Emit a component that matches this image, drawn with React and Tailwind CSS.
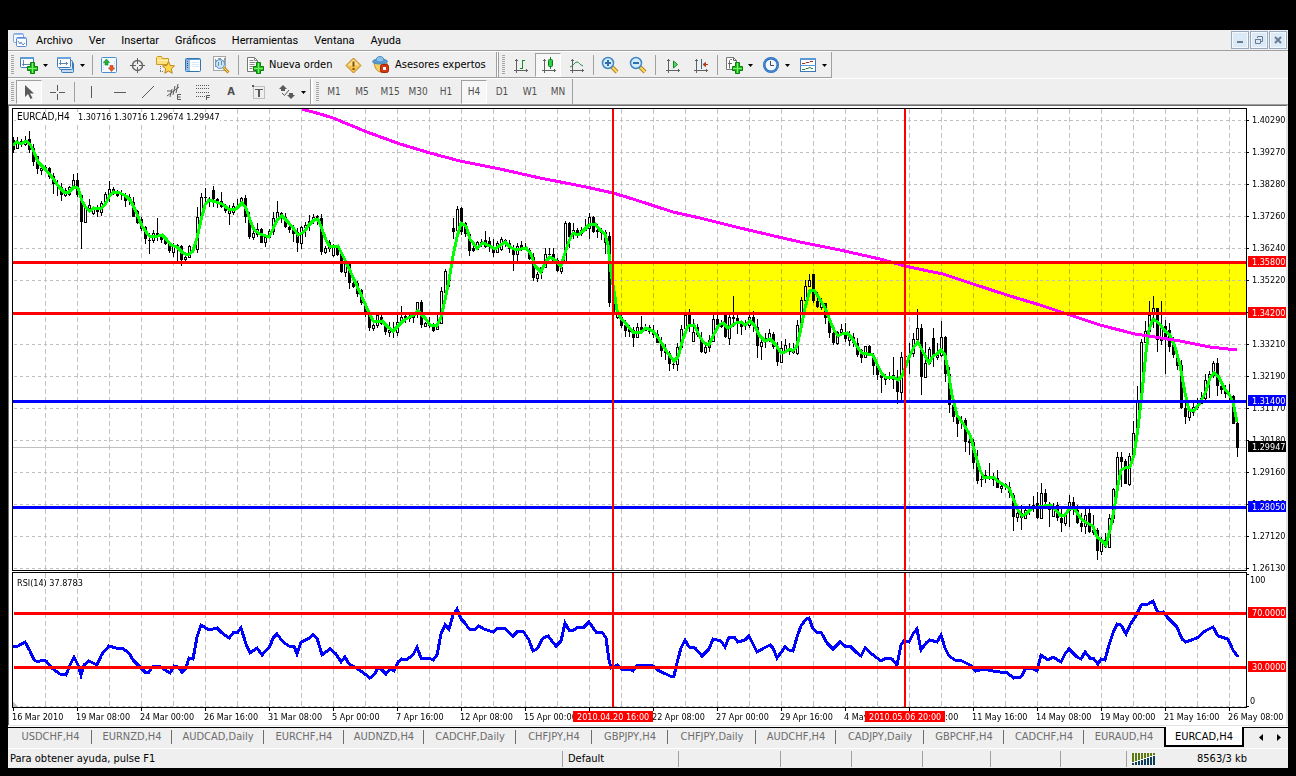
import React, { useState } from 'react';

const MENUS = ['Archivo', 'Ver', 'Insertar', 'Gráficos', 'Herramientas', 'Ventana', 'Ayuda'];

const TIMEFRAMES = ['M1', 'M5', 'M15', 'M30', 'H1', 'H4', 'D1', 'W1', 'MN'];

const TABS = [
  { name: 'USDCHF,H4', width: 'w-[83px]' },
  { name: 'EURNZD,H4', width: 'w-[80px]' },
  { name: 'AUDCAD,Daily', width: 'w-[92px]' },
  { name: 'EURCHF,H4', width: 'w-[80px]' },
  { name: 'AUDNZD,H4', width: 'w-[80px]' },
  { name: 'CADCHF,Daily', width: 'w-[92px]' },
  { name: 'CHFJPY,H4', width: 'w-[76px]' },
  { name: 'GBPJPY,H4', width: 'w-[76px]' },
  { name: 'CHFJPY,Daily', width: 'w-[88px]' },
  { name: 'AUDCHF,H4', width: 'w-[80px]' },
  { name: 'CADJPY,Daily', width: 'w-[88px]' },
  { name: 'GBPCHF,H4', width: 'w-[80px]' },
  { name: 'CADCHF,H4', width: 'w-[80px]' },
  { name: 'EURAUD,H4', width: 'w-[80px]' },
  { name: 'EURCAD,H4', width: 'w-[80px]' },
];

// high, open, close, low as chart rows, one entry per H4 bar
const BARS = `
137 140 150 153,137 148 141 149,139 141 143 147,136 144 141 146,131 139 150 153,144 148 162 166,156 156 169 174,163 170 168 175,
165 167 169 172,167 168 177 179,173 176 184 194,180 184 186 196,183 187 195 201,188 195 190 197,186 194 187 196,174 188 180 189,
173 180 195 197,194 195 222 249,206 222 207 223,199 208 205 210,206 213 209 215,205 208 212 217,201 212 203 216,192 204 194 206,
181 196 189 202,187 189 193 195,190 192 196 197,190 194 195 200,193 195 201 207,194 197 201 205,197 202 217 217,210 211 223 224,
217 219 229 231,226 227 239 244,233 240 241 254,230 240 233 243,218 233 236 241,234 236 240 243,236 238 244 245,243 244 251 253,
243 252 246 257,244 245 248 262,245 246 260 266,254 259 257 261,245 257 246 257,246 249 251 252,207 249 217 253,193 217 197 217,
188 197 198 203,197 199 201 207,186 190 199 207,198 199 202 208,192 201 207 208,204 205 211 213,205 213 210 225,203 212 206 215,
199 208 206 209,197 205 198 206,195 198 217 223,212 217 237 239,228 237 233 240,223 234 229 237,228 229 243 243,235 242 237 247,
229 237 231 239,212 231 218 235,201 218 212 221,212 213 217 223,213 217 227 228,222 227 230 233,225 228 234 242,228 232 243 252,
226 243 227 249,222 227 225 237,215 225 221 231,214 221 217 224,215 216 219 225,214 218 252 255,246 252 248 254,240 248 242 252,
244 255 247 257,246 248 255 256,254 254 272 273,259 272 262 277,262 262 283 289,275 283 287 288,281 283 294 297,289 290 303 305,
303 305 313 317,312 314 328 331,320 328 325 331,312 325 315 328,313 317 324 325,322 324 332 335,322 332 330 337,322 330 332 338,
315 332 322 336,306 322 317 325,315 316 319 323,313 318 316 322,312 317 313 323,302 313 302 318,300 302 325 328,322 326 323 327,
317 324 326 328,323 327 331 332,315 329 323 330,287 323 291 323,269 292 271 295,270 280 277 287,218 228 232 239,206 230 209 233,
207 208 232 235,222 223 234 237,232 234 251 256,245 248 251 252,241 249 242 250,239 242 243 247,231 240 247 248,237 241 246 252,
239 247 253 257,241 252 243 253,237 249 239 251,239 240 244 247,240 243 249 253,245 248 255 271,243 254 246 264,241 245 248 251,
243 247 249 250,248 250 259 260,253 257 278 281,272 278 274 282,270 272 267 279,248 267 254 268,248 254 255 258,248 254 262 263,
258 260 271 272,260 271 267 274,221 263 223 264,222 223 237 248,223 233 230 239,228 230 233 238,227 233 230 236,219 230 228 231,
213 228 217 239,216 217 232 233,224 230 232 238,228 231 233 240,230 232 243 254,232 236 303 307,298 303 315 319,312 317 314 319,
313 317 326 328,320 325 331 337,325 328 332 337,327 330 338 347,323 337 327 338,316 327 330 332,324 330 327 331,325 327 332 334,
325 330 335 338,330 334 343 343,337 343 351 357,344 350 353 360,351 353 364 371,358 364 365 369,343 364 347 371,325 347 329 348,
314 328 315 330,309 314 325 332,319 341 332 342,324 327 335 337,332 338 352 353,343 352 347 354,335 347 340 352,314 341 319 342,
315 319 325 327,320 323 327 328,314 315 337 338,314 338 317 345,296 317 319 327,313 318 323 334,320 323 327 335,320 325 323 330,
312 325 317 328,311 317 323 332,319 327 346 358,338 346 342 360,333 340 338 348,329 340 333 342,332 334 347 349,342 347 362 366,
341 362 348 362,339 350 345 353,343 348 352 355,343 352 349 354,320 353 325 355,297 325 300 330,280 300 286 303,274 286 280 286,
274 274 301 303,292 301 307 308,298 307 302 310,303 303 318 324,317 318 333 338,330 333 343 345,331 343 332 345,324 332 329 335,
323 332 339 342,331 340 336 346,333 337 343 347,338 343 355 357,349 350 358 363,346 357 346 358,345 346 354 355,353 355 366 375,
363 366 375 380,372 375 378 393,374 379 376 385,372 376 378 380,357 375 380 389,370 377 392 404,352 392 357 400,353 357 356 370,
343 357 355 374,333 353 339 357,309 339 328 343,324 328 377 395,342 377 363 377,347 363 349 364,328 338 355 367,343 357 355 360,
321 355 337 357,336 337 374 382,367 374 405 413,397 405 417 422,412 417 424 437,416 422 423 429,418 420 442 452,437 441 443 455,
439 442 463 469,450 463 481 484,475 479 480 487,470 477 475 483,463 477 478 480,473 477 480 486,470 478 488 488,483 488 486 493,
483 484 486 490,482 487 493 498,493 495 517 531,507 517 513 522,505 513 518 530,507 518 510 519,504 511 507 515,496 508 505 512,
492 503 518 519,483 518 493 519,489 493 502 505,502 504 510 527,503 516 506 517,502 505 518 521,507 518 523 532,513 523 515 526,
495 510 502 527,497 502 510 515,505 510 523 524,513 523 527 532,509 526 515 534,508 513 532 533,515 530 533 535,528 530 551 560,
537 551 540 555,533 540 547 548,514 547 518 547,488 518 489 523,452 489 457 490,452 457 462 487,459 461 484 484,453 484 456 486,
421 456 433 457,386 433 400 435,339 400 342 402,321 342 331 343,301 331 315 337,296 313 308 328,308 308 340 352,301 340 327 345,
320 326 337 374,323 330 347 352,337 345 355 358,355 356 366 370,360 365 408 409,397 408 417 424,407 417 410 421,400 412 407 416,
398 407 405 410,392 403 398 404,374 398 380 400,371 380 374 398,361 375 363 378,358 363 386 396,380 386 390 394,385 390 394 398,
384 394 396 402,395 396 424 424,422 423 448 457`
  .trim()
  .split(/,\s*/)
  .map((bar) => bar.split(' ').map(Number));

const FAST_MA =
  '13,145 17,142 21,144 26,141 30,144 34,152 38,162 45,169 52,177 59,187 64,192 69,192 74,187 78,188 82,201 86,208 90,211 94,208 98,209 102,208 106,203 110,195 114,192 120,193 126,196 131,201 137,214 142,226 149,236 154,237 162,235 166,239 171,245 177,247 183,253 188,255 193,251 197,238 201,220 205,205 209,200 216,202 222,204 230,210 236,209 242,203 246,208 250,220 254,230 260,234 269,237 273,229 277,220 282,216 288,222 294,229 298,235 304,232 309,225 314,220 318,219 322,229 326,240 330,247 338,246 344,258 352,275 362,297 366,306 370,315 374,322 382,321 388,327 393,331 398,326 404,320 410,317 414,315 418,311 422,315 426,319 430,325 437,326 441,317 445,300 449,280 453,256 457,237 461,223 466,226 470,239 477,248 483,243 490,246 495,249 505,242 510,247 516,250 526,248 531,254 535,266 541,272 546,261 550,257 555,260 561,266 565,253 569,241 573,233 578,235 583,231 589,225 595,224 600,230 605,234 608,245 611,272 614,291 617,310 620,317 627,325 633,332 641,332 646,328 653,331 659,339 667,352 674,361 678,357 683,339 688,326 694,325 700,337 704,343 709,345 714,334 719,325 723,323 728,328 736,323 741,322 745,325 750,321 755,326 759,335 765,341 770,339 776,345 781,353 785,352 790,349 793,351 797,346 801,328 805,308 810,290 814,290 819,298 825,308 829,318 834,330 838,336 842,334 847,333 852,338 856,345 862,353 873,355 877,364 882,374 886,377 893,377 898,380 902,376 905,368 910,355 914,347 918,342 923,352 929,363 933,356 937,354 941,350 945,355 948,370 952,395 957,415 964,425 970,435 975,453 980,470 984,478 988,477 993,477 999,482 1009,488 1013,498 1018,510 1022,516 1026,514 1032,508 1038,507 1050,505 1054,508 1060,515 1065,515 1070,508 1074,508 1081,519 1087,523 1093,526 1097,537 1102,541 1106,545 1110,530 1114,510 1118,485 1121,470 1125,468 1130,467 1134,455 1138,428 1142,393 1146,352 1149,330 1153,319 1159,323 1165,331 1170,335 1175,347 1180,365 1185,393 1189,410 1194,411 1200,403 1206,391 1210,378 1214,373 1219,377 1224,388 1229,394 1233,402 1237,422';

const SLOW_MA =
  '302,109 320,114 333,118 350,125 367,132 400,144 430,153 460,161 500,169 540,178 586,187 613,193 633,199 673,212 700,218 740,228 770,235 800,242 840,250 880,259 905,266 928,271 943,274 973,284 1010,296 1040,305 1070,315 1100,325 1135,334 1155,337 1180,341 1210,347 1237,350';

const RSI =
  '13,646 18,646 25,642 30,651 34,660 38,662 42,660 46,661 52,668 60,674 66,675 70,665 74,657 78,665 81,675 84,665 89,661 97,665 102,654 109,646 116,648 122,648 129,653 133,660 141,668 145,672 149,672 153,666 159,666 165,670 170,673 174,666 178,667 182,672 186,668 189,658 193,659 197,637 201,625 209,630 217,628 222,633 229,638 234,632 238,632 241,628 246,644 250,653 257,648 262,655 270,646 273,638 277,634 283,642 289,646 294,646 297,654 301,642 308,639 313,635 317,638 322,655 330,649 336,654 341,662 345,657 349,664 353,666 361,671 370,678 374,675 378,668 382,670 386,674 390,669 394,671 398,662 402,659 406,660 413,655 417,647 421,658 429,658 433,660 437,655 441,634 445,625 449,629 453,615 457,609 461,619 465,623 469,629 474,630 479,626 484,629 493,632 498,628 504,628 513,636 518,631 523,631 529,640 533,651 537,649 543,638 548,636 556,646 561,641 565,623 569,630 574,630 578,627 584,627 589,622 596,632 602,632 606,638 609,660 611,668 617,665 622,669 629,669 633,671 637,665 645,665 653,666 659,671 666,674 670,676 674,676 677,663 681,648 685,640 689,647 695,648 702,656 709,649 713,639 721,641 725,647 729,637 734,637 738,642 745,640 749,636 753,644 757,652 764,648 770,645 773,648 777,658 785,647 789,650 793,651 797,637 801,626 806,619 809,618 813,629 817,632 821,632 827,643 833,649 840,642 845,646 850,646 857,653 861,656 865,648 873,655 881,661 886,658 892,659 897,665 901,645 904,641 909,642 913,634 917,629 919,640 921,650 926,643 930,640 937,642 941,635 945,648 949,656 955,660 962,661 970,665 976,671 984,669 993,671 1000,672 1006,672 1014,678 1021,677 1026,668 1032,668 1037,671 1041,655 1048,660 1053,657 1061,662 1065,654 1069,649 1077,657 1081,659 1085,652 1090,658 1093,658 1098,664 1101,659 1105,660 1109,645 1113,633 1117,624 1121,625 1126,634 1130,625 1137,614 1141,605 1148,604 1153,601 1158,613 1163,612 1168,618 1177,627 1182,639 1186,642 1197,638 1205,631 1213,627 1218,636 1228,639 1233,650 1238,657';

const PRICES = [
  '1.40290', '1.39270', '1.38280', '1.37260', '1.36240', '1.35220', '1.34230', '1.33210',
  '1.32190', '1.31170', '1.30180', '1.29160', '1.28140', '1.27120', '1.26130',
];

const TIMES = [
  '16 Mar 2010', '19 Mar 08:00', '24 Mar 00:00', '26 Mar 16:00', '31 Mar 08:00', '5 Apr 00:00', '7 Apr 16:00',
  '12 Apr 08:00', '15 Apr 00:00', '19 Apr 16:00', '22 Apr 08:00', '27 Apr 00:00', '29 Apr 16:00', '4 May 08:00',
  '7 May 00:00', '11 May 16:00', '14 May 08:00', '19 May 00:00', '21 May 16:00', '26 May 08:00',
];

const PRICE_TAGS = [
  { y: 256, text: '1.35800', fill: '#ff0000' },
  { y: 307, text: '1.34200', fill: '#ff0000' },
  { y: 395, text: '1.31400', fill: '#0000ff' },
  { y: 441, text: '1.29947', fill: '#000000' },
  { y: 501, text: '1.28050', fill: '#0000ff' },
  { y: 607, text: '70.00000', fill: '#ff0000' },
  { y: 661, text: '30.00000', fill: '#ff0000' },
];

const TIME_TAGS = [
  { x: 573, text: '2010.04.20 16:00' },
  { x: 865, text: '2010.05.06 20:00' },
];

const GRID_X = Array.from({ length: 38 }, (_, i) => 45 + i * 32);
const GRID_Y = Array.from({ length: 15 }, (_, i) => 120 + i * 32);

function Candles() {
  let wicks = '';
  let down = '';
  let up = '';
  BARS.forEach(([high, open, close, low], i) => {
    const x = 13 + i * 4;
    const top = Math.min(open, close);
    const height = Math.max(Math.abs(open - close), 1);
    wicks += `M${x} ${high}h1V${low}h-1z`;
    if (close > open || height < 2) {
      down += `M${x - 1} ${top}h3v${height}h-3z`;
    } else {
      down += `M${x - 1} ${top}h3v${height + 1}h-3z`;
      up += `M${x} ${top + 1}h1v${height - 1}h-1z`;
    }
  });
  return (
    <g>
      <path d={wicks} fill="#000" />
      <path d={down} fill="#000" />
      <path d={up} fill="#fff" />
    </g>
  );
}

function Chart() {
  return (
    <svg
      viewBox="12 108 1274 617"
      className="block w-full h-auto bg-white isolate font-['DejaVu_Sans_Condensed','DejaVu_Sans',sans-serif] text-[9px]"
      shapeRendering="crispEdges"
      role="img"
      aria-label="EURCAD H4"
    >
      <rect x="12" y="108" width="1274" height="617" fill="#fff" />

      {/* Grid, with the resistance zone tinting the vertical lines */}
      <g stroke="#c0c0c0" strokeDasharray="5 3">
        {GRID_X.map((x) => (
          <path key={x} d={`M${x + 0.5} 109V570M${x + 0.5} 573V706`} />
        ))}
      </g>
      <rect x="613" y="264" width="633" height="48" fill="#ffff00" className="mix-blend-multiply" />
      <g stroke="#c0c0c0" strokeDasharray="3 3">
        {GRID_Y.map((y) => (
          <path key={y} d={`M14 ${y + 0.5}H1246`} />
        ))}
        <path d="M14 706.5H1246" />
      </g>
      <path d="M13 447.5H1246" stroke="#c0c0c0" />
      <path d="M13 702l5 5h-5z" fill="#c0c0c0" />

      <Candles />
      <polyline points={FAST_MA} fill="none" stroke="#00ff00" strokeWidth="3" />
      <polyline points={SLOW_MA} fill="none" stroke="#ff00ff" strokeWidth="3" />
      <polyline points={RSI} fill="none" stroke="#0000ff" strokeWidth="3" />

      {/* Support and resistance levels */}
      <path d="M13 262.5H1246M13 313.5H1246M14 613.5H1246M14 667.5H1246" stroke="#ff0000" strokeWidth="3" />
      <path d="M13 401.5H1246M13 507.5H1246" stroke="#0000ff" strokeWidth="3" />
      <path d="M613 109V570M613 573V707M905 109V570M905 573V707" stroke="#ff0000" strokeWidth="2" />

      {/* Pane frames */}
      <g fill="none" stroke="#000">
        <rect x="12.5" y="108.5" width="1234" height="462" />
        <rect x="12.5" y="572.5" width="1234" height="135" />
        {GRID_Y.map((y) => (
          <path key={y} d={`M1247 ${y + 0.5}h2`} />
        ))}
        <path d="M1247 574.5h2M1247 706.5h2" />
        {TIMES.map((t, i) => (
          <path key={t} d={`M${13.5 + i * 64} 708v3`} />
        ))}
      </g>

      <rect x="16" y="112" width="204" height="10" fill="#fff" />
      <text x="17" y="120" className="text-[10px]">EURCAD,H4</text>
      <text x="78" y="120">1.30716 1.30716 1.29674 1.29947</text>
      <text x="17" y="586">RSI(14) 37.8783</text>

      {PRICES.map((price, i) => (
        <text key={price} x="1252" y={123 + i * 32}>{price}</text>
      ))}
      <text x="1250" y="583">100</text>
      <text x="1250" y="704">0</text>
      {PRICE_TAGS.map((tag) => (
        <g key={tag.text}>
          <rect x="1248" y={tag.y} width="38" height="11" fill={tag.fill} />
          <text x="1252" y={tag.y + 9} fill="#fff">{tag.text}</text>
        </g>
      ))}

      {TIMES.map((t, i) => (
        <text key={t} x={12 + i * 64} y="720">{t}</text>
      ))}
      {TIME_TAGS.map((tag) => (
        <g key={tag.text}>
          <rect x={tag.x} y="711" width="80" height="11" fill="#ff0000" />
          <text x={tag.x + 4} y="720" fill="#fff">{tag.text}</text>
        </g>
      ))}
    </svg>
  );
}

function Icon({ children }) {
  return (
    <svg viewBox="0 0 20 20" className="w-5 h-5 shrink-0" fill="none" aria-hidden="true">
      {children}
    </svg>
  );
}

function Plus() {
  return (
    <>
      <path d="M11.5 7.5h4v4h3v4h-3v3h-4v-3h-3v-4h3z" fill="#1fc21f" stroke="#0a7d0a" />
      <path d="M13.5 8v10M9 13.5h9" stroke="#7bf06a" />
    </>
  );
}

function NewChartIcon() {
  return (
    <Icon>
      <rect x="1.5" y="2.5" width="13" height="10" rx="1" fill="#fff" stroke="#3d7ab8" />
      <path d="M1 3h14" stroke="#5b9bd8" strokeWidth="2" />
      <path d="M4.5 5v6M3 9.5h8" stroke="#5b86ad" />
      <Plus />
    </Icon>
  );
}

function ProfilesIcon() {
  return (
    <Icon>
      <rect x="5.5" y="7.5" width="12" height="10" rx="1" fill="#c3dcf3" stroke="#3d7ab8" />
      <rect x="3.5" y="5.5" width="13" height="9" rx="1" fill="#dceafa" stroke="#3d7ab8" />
      <rect x="1.5" y="2.5" width="13" height="10" rx="1" fill="#fff" stroke="#3d7ab8" />
      <path d="M1 3h14" stroke="#6ba5dc" strokeWidth="2" />
      <path d="M4.5 5v5M3 8.5h9M10.5 7v3" stroke="#5b86ad" />
    </Icon>
  );
}

function MarketWatchIcon() {
  return (
    <Icon>
      <rect x="2.5" y="2.5" width="15" height="15" rx="1" fill="#f4faff" stroke="#4a90cf" />
      <path d="M4.5 15V5M15.5 15V5" stroke="#c5d9ec" strokeDasharray="1 1" />
      <path d="M7.5 4l3 3.5H9V10H6V7.5H4.5z" fill="#22b53a" stroke="#0f7d22" strokeWidth=".6" />
      <path d="M12.5 16.5l-3-3.5H11v-2.5h3V13h1.5z" fill="#ee5a24" stroke="#b03a10" strokeWidth=".6" />
    </Icon>
  );
}

function CrosshairIcon() {
  return (
    <Icon>
      <circle cx="10.5" cy="10.5" r="5" stroke="#6a6a6a" strokeWidth="1.5" />
      <path d="M10.5 3v6M10.5 12v6M3 10.5h6M12 10.5h6" stroke="#5f5f5f" />
    </Icon>
  );
}

function NavigatorIcon() {
  return (
    <Icon>
      <path d="M1.5 9.5v-7l1-1h4l1 2h6v6z" fill="#ffe07a" stroke="#c99a25" />
      <path d="M2 5.5h11" stroke="#fff2b8" />
      <path d="M5.5 11v6M5 16.5h4" stroke="#777" strokeDasharray="1 1" />
      <path d="M13.5 6.5l1.7 4 4.3.4-3.2 2.9.9 4.4-3.7-2.2-3.7 2.2.9-4.4-3.2-2.9 4.3-.4z" fill="#ffd84a" stroke="#b8831a" />
    </Icon>
  );
}

function DataIcon() {
  return (
    <Icon>
      <rect x="2.5" y="3.5" width="15" height="13" rx="1" fill="#fff" stroke="#2e75b6" />
      <path d="M3 4.5h14" stroke="#5f9fd9" />
      <path d="M3 5h4v11H3z" fill="#8dbdea" />
      <path d="M4 6h1v1H4zM4 12h1v1H4z" fill="#d22" />
      <path d="M4 8h1v1H4zM4 10h1v1H4z" fill="#124a86" />
      <path d="M9 7.5h7M9 9.5h7M9 11.5h7" stroke="#dbe8f5" />
    </Icon>
  );
}

function TesterIcon() {
  return (
    <Icon>
      <rect x="2.5" y="1.5" width="12" height="14" fill="#fafafa" stroke="#a5a5a5" />
      <path d="M4.5 4v8M13.5 3v5M7 3.5h3M4.5 5.5h8" stroke="#8b9aa8" />
      <circle cx="9" cy="9" r="4.5" fill="#bfe0f8" fillOpacity=".8" stroke="#5a97c9" />
      <path d="M7.5 7v4M10.5 6v4" stroke="#6d8ba5" />
      <path d="M12.5 12.5l5 5" stroke="#c08d1c" strokeWidth="3" />
      <path d="M12.5 12.5l4.5 4.5" stroke="#ffd764" />
    </Icon>
  );
}

function NewOrderIcon() {
  return (
    <Icon>
      <path d="M2.5 2.5h7l3 3v11h-10z" fill="#fff" stroke="#777" />
      <path d="M9.5 2.5v3h3M4.5 5.5h4M4.5 7.5h6M4.5 9.5h5M4.5 11.5h4M4.5 13.5h3" stroke="#8a8a8a" />
      <Plus />
    </Icon>
  );
}

function AlertIcon() {
  return (
    <Icon>
      <path d="M10.5 3l7.500 7.500-7.500 7.500L3 10.5z" fill="#f3c04e" stroke="#b9821d" strokeLinejoin="round" />
      <path d="M10.5 4.5l6 6h-12z" fill="#ffe29a" />
      <path d="M9.5 6.5h2v5h-2zM9.5 13h2v2h-2z" fill="#7d4f0c" />
    </Icon>
  );
}

function ExpertIcon() {
  return (
    <Icon>
      <path d="M3 8c1 5 3 9 7 9s6-4 6-9z" fill="#f7cf62" stroke="#c08a22" />
      <ellipse cx="9" cy="6.5" rx="7.5" ry="2.5" fill="#5c9bd0" stroke="#4a8cc4" />
      <path d="M5 6c0-3 1.5-4.5 4-4.5S13 3 13 6c-2 1.300-6 1.300-8 0z" fill="#8cc1ea" stroke="#4a8cc4" />
      <rect x="9.5" y="9.5" width="8" height="8" rx="2" fill="#d8380f" stroke="#9c2407" />
      <path d="M12 12h3v3h-3z" fill="#fff" />
    </Icon>
  );
}

function AxisIcon({ children }) {
  return (
    <Icon>
      <path d="M6.5 4v14M4 15.5h14M5 5.5h3M16.5 14v3" stroke="#606060" />
      {children}
    </Icon>
  );
}

function ZoomIcon({ plus }) {
  return (
    <Icon>
      <path d="M12 12l5 5" stroke="#b3851f" strokeWidth="4" />
      <path d="M12 12l5 5" stroke="#ffd966" strokeWidth="2" />
      <circle cx="8" cy="8" r="5.5" fill="#d2ebfd" stroke="#3f86c4" strokeWidth="1.5" />
      <path d="M5 8h6" stroke="#2f6ea8" strokeWidth="2" />
      {plus && <path d="M8 5v6" stroke="#2f6ea8" strokeWidth="2" />}
    </Icon>
  );
}

function IndicatorsIcon() {
  return (
    <Icon>
      <path d="M2.5 2.5h7l3 3v9h-10z" fill="#fff" stroke="#777" />
      <path d="M9.5 2.5v3h3M8 4.5H6.5l-1 1v8M4 8.5h4" stroke="#666" />
      <Plus />
    </Icon>
  );
}

function ClockIcon() {
  return (
    <Icon>
      <circle cx="10" cy="10" r="6.8" fill="#eef6ff" stroke="#1b63b8" strokeWidth="2.4" />
      <circle cx="10" cy="10" r="7" stroke="#5fa3ea" strokeWidth=".8" />
      <path d="M9.5 6V10.5H13" stroke="#4a4a4a" />
      <path d="M9.5 4v1M9.5 15v1M4 10.5h1M15 10.5h1" stroke="#888" />
    </Icon>
  );
}

function TemplateIcon() {
  return (
    <Icon>
      <rect x="2.5" y="3.5" width="15" height="13" fill="#fff" stroke="#3d7ab8" />
      <path d="M2 4h16" stroke="#5a9ad8" strokeWidth="2" />
      <path d="M2 10.5h16" stroke="#5a9ad8" />
      <path d="M4 8.5h3l1-1h3l1-1h3" stroke="#a33b1a" />
      <path d="M4 14.5h3l1-1h2l2-1.5 1 1.5h2" stroke="#2b8a3a" />
    </Icon>
  );
}

function Arrow() {
  return (
    <svg viewBox="0 0 5 3" className="w-[5px] h-[3px]" aria-hidden="true">
      <path d="M0 0h5L2.5 3z" fill="#000" />
    </svg>
  );
}

function Grip() {
  return <div className="w-[3px] h-5 ml-[3px] mr-px mb-0.5 shrink-0 bg-[repeating-linear-gradient(#a5a5a5_0_1px,#efefef_1px_2px)]" />;
}

function Separator() {
  return (
    <div className="w-1.5 h-5 mb-0.5 shrink-0 flex justify-center">
      <div className="w-px h-full bg-[#a0a0a0]" />
    </div>
  );
}

const PRESSED =
  'w-[26px] h-6 flex items-center justify-center bg-[#f7f7f7] border border-t-[#a0a0a0] border-l-[#a0a0a0] border-b-white border-r-white';

function ToolButton({ label, pressed, menu, children }) {
  return (
    <button
      aria-label={label}
      className={`h-6 shrink-0 flex items-center ${menu ? 'w-[37px] pl-1 gap-1' : 'w-7 justify-center'}`}
    >
      <span className={pressed ? PRESSED : 'flex items-center'}>{children}</span>
      {menu && <Arrow />}
    </button>
  );
}

function MainToolbar() {
  return (
    <div className="flex">
      <div className="h-[27px] flex items-end border-b border-[#a0a0a0] border-t border-t-white">
        <Grip />
        <ToolButton label="Nuevo gráfico" menu><NewChartIcon /></ToolButton>
        <ToolButton label="Perfiles" menu><ProfilesIcon /></ToolButton>
        <Separator />
        <ToolButton label="Observación del mercado"><MarketWatchIcon /></ToolButton>
        <ToolButton label="Ventana de datos"><CrosshairIcon /></ToolButton>
        <ToolButton label="Navegador"><NavigatorIcon /></ToolButton>
        <ToolButton label="Terminal"><DataIcon /></ToolButton>
        <ToolButton label="Probador"><TesterIcon /></ToolButton>
        <Separator />
        <button className="w-[98px] h-6 pl-1 shrink-0 flex items-center gap-1 whitespace-nowrap">
          <NewOrderIcon />
          Nueva orden
        </button>
        <ToolButton label="Editor"><AlertIcon /></ToolButton>
        <button className="w-[129px] h-6 pl-1 shrink-0 flex items-center gap-1 whitespace-nowrap">
          <ExpertIcon />
          Asesores expertos
        </button>
        <div className="w-[3px] h-full border-x border-[#a0a0a0] bg-white" />
        <Grip />
        <ToolButton label="Barras">
          <AxisIcon><path d="M12.5 5v9M12 5.5h3M10 13.5h3" stroke="#1a8a2a" /></AxisIcon>
        </ToolButton>
        <ToolButton label="Velas" pressed>
          <AxisIcon>
            <path d="M12.5 2v12" stroke="#0f7d22" />
            <rect x="10.5" y="4.5" width="4" height="7" rx="1" fill="#2fd03f" stroke="#0f7d22" />
          </AxisIcon>
        </ToolButton>
        <ToolButton label="Línea">
          <AxisIcon><path d="M4 12c4-1 4-5 7-5 2 0 3 3 6 4" stroke="#2b8a4a" /></AxisIcon>
        </ToolButton>
        <Separator />
        <ToolButton label="Acercar"><ZoomIcon plus /></ToolButton>
        <ToolButton label="Alejar"><ZoomIcon /></ToolButton>
        <Separator />
        <ToolButton label="Desplazamiento automático">
          <AxisIcon><path d="M11.5 6v7l4-3.5z" fill="#4be05c" stroke="#16892a" /></AxisIcon>
        </ToolButton>
        <ToolButton label="Desplazar gráfico">
          <AxisIcon>
            <path d="M11.5 4v10" stroke="#2b6a9e" />
            <path d="M18 9.5h-4M15.5 7.5l-2.5 2 2.5 2z" fill="#b6391a" stroke="#b6391a" />
          </AxisIcon>
        </ToolButton>
        <Separator />
        <ToolButton label="Indicadores" menu><IndicatorsIcon /></ToolButton>
        <ToolButton label="Períodos" menu><ClockIcon /></ToolButton>
        <ToolButton label="Plantillas" menu><TemplateIcon /></ToolButton>
        <div className="w-px h-full bg-[#a0a0a0]" />
      </div>
    </div>
  );
}

function DrawingToolbar({ timeframe, onSelectTimeframe }) {
  return (
    <div className="h-[26px] flex items-end border-t border-white text-[10px] text-[#4f4f4f]">
      <Grip />
      <ToolButton label="Cursor" pressed>
        <Icon><path d="M6 3v12l3-3 2.5 5 2-1L11 11.5h4z" fill="#5a5a5a" /></Icon>
      </ToolButton>
      <ToolButton label="Retícula">
        <Icon><path d="M10.5 3v6M10.5 12v6M3 10.5h6M12 10.5h6" stroke="#5a5a5a" /></Icon>
      </ToolButton>
      <Separator />
      <ToolButton label="Línea vertical">
        <Icon><path d="M10.5 4v12" stroke="#5a5a5a" /></Icon>
      </ToolButton>
      <ToolButton label="Línea horizontal">
        <Icon><path d="M5 10.5h12" stroke="#5a5a5a" /></Icon>
      </ToolButton>
      <ToolButton label="Línea de tendencia">
        <Icon><path d="M5 16L17 4" stroke="#5a5a5a" /></Icon>
      </ToolButton>
      <ToolButton label="Canal equidistante">
        <Icon>
          <path d="M2 14L14 5M5 15L7 7M8 13l2-9M11 11l2-9M2 9h5" stroke="#5a5a5a" />
          <path d="M16 12.5h-3.5v5H16M13 15h2.5" stroke="#5a5a5a" />
        </Icon>
      </ToolButton>
      <ToolButton label="Fibonacci">
        <Icon>
          <path d="M3 3.5h13M3 6.5h13M3 10.5h13M3 14.5h9" stroke="#5a5a5a" strokeDasharray="1 1" />
          <path d="M17 13.5h-3.5V18M14 15.5h2.5" stroke="#5a5a5a" />
        </Icon>
      </ToolButton>
      <ToolButton label="Texto"><span className="w-5 text-center text-[11px] font-bold">A</span></ToolButton>
      <ToolButton label="Etiqueta de texto">
        <Icon>
          <rect x="4.5" y="4.5" width="11" height="12" stroke="#8a8a8a" strokeDasharray="1 1" />
          <path d="M6 7.5h8" stroke="#5a5a5a" />
          <path d="M10 7v8" stroke="#5a5a5a" strokeWidth="2" />
          <path d="M3 3h2v2H3z" fill="#5a5a5a" />
        </Icon>
      </ToolButton>
      <ToolButton label="Flechas" menu>
        <Icon>
          <path d="M6 3l4 4H8v2H4V7H2zM14 17l-4-4h2v-2h4v2h2z" fill="#5a5a5a" />
          <path d="M5 11l2.5 2.5L12 8" stroke="#5a5a5a" />
        </Icon>
      </ToolButton>
      <div className="w-[3px] h-full border-l border-[#a0a0a0] bg-white" />
      <Grip />
      {TIMEFRAMES.map((tf) => (
        <button key={tf} onClick={() => onSelectTimeframe(tf)} className="w-7 h-6 shrink-0 flex items-center justify-center">
          <span className={tf === timeframe ? PRESSED : ''}>{tf}</span>
        </button>
      ))}
      <div className="w-px h-full bg-[#a0a0a0]" />
    </div>
  );
}

function WindowButton({ label, children }) {
  return (
    <button
      aria-label={label}
      className="w-[18px] h-[18px] flex items-center justify-center border border-[#9aa9bb] bg-[#dce9f6] shadow-[inset_0_0_0_1px_#f4f9ff]"
    >
      <svg viewBox="0 0 10 10" className="w-2.5 h-2.5" fill="none" stroke="#6b7c90" aria-hidden="true">
        {children}
      </svg>
    </button>
  );
}

function MenuBar() {
  return (
    <div className="h-[21px] flex items-center border-b border-[#a0a0a0]">
      <svg viewBox="0 0 16 16" className="w-4 h-4 ml-1" fill="none" aria-hidden="true">
        <rect x="1.5" y="1.5" width="10" height="9" rx="1" fill="#f3f8ff" stroke="#7fa8e0" />
        <path d="M1 2.5h11" stroke="#9bbcec" />
        <rect x="4.5" y="5.5" width="10" height="9" rx="1" fill="#fff" stroke="#5a8ad6" />
        <path d="M4 6.5h11" stroke="#8ab0e8" />
        <path d="M6 9l2 3 1-2 2 3 2-2" stroke="#5a8ad6" />
      </svg>
      <nav className="flex pt-px font-[Roboto,'Liberation_Sans',sans-serif]">
        {MENUS.map((menu) => (
          <button key={menu} className="px-2">{menu}</button>
        ))}
      </nav>
      <div className="flex ml-auto mr-px gap-px">
        <WindowButton label="Minimizar"><path d="M2 7h6" strokeWidth="2" /></WindowButton>
        <WindowButton label="Restaurar"><path d="M3.5 3V1.5h5v5H7M1.5 4.5h5v4h-5zM1 4.5h6" /></WindowButton>
        <WindowButton label="Cerrar"><path d="M2 2l6 6M8 2L2 8" strokeWidth="2" /></WindowButton>
      </div>
    </div>
  );
}

function ChartTabs({ active, onSelect }) {
  return (
    <div className="h-[21px] flex items-start border-t border-black pl-px text-[#6d6d6d]">
      {TABS.map((tab, i) => (
        <button
          key={tab.name}
          onClick={() => onSelect(tab.name)}
          className={`${tab.width} shrink-0 relative whitespace-nowrap ${
            tab.name === active ? '-mt-px h-5 pt-px bg-white text-black border-2 border-t-0 border-black' : 'h-[17px]'
          }`}
        >
          {tab.name}
          {tab.name !== active && i < TABS.length - 2 && (
            <span className="absolute right-0 top-0.5 w-px h-3.5 bg-[#6d6d6d]" />
          )}
        </button>
      ))}
      <div className="ml-auto mr-1 h-[18px] flex items-center gap-2">
        <button aria-label="Anterior" className="w-2.5 h-4 flex items-center justify-center">
          <svg viewBox="0 0 4 7" className="w-1 h-[7px]"><path d="M4 0v7L0 3.5z" fill="#000" /></svg>
        </button>
        <button aria-label="Siguiente" className="w-2.5 h-4 flex items-center justify-center">
          <svg viewBox="0 0 4 7" className="w-1 h-[7px]"><path d="M0 0v7l4-3.5z" fill="#000" /></svg>
        </button>
      </div>
    </div>
  );
}

function StatusBar() {
  return (
    <footer className="h-5 flex items-center border-t border-white">
      <span className="w-[554px] pl-0.5">Para obtener ayuda, pulse F1</span>
      <span className="w-[116px] h-4 pl-[5px] border-l border-[#a0a0a0]">Default</span>
      <span className="w-[102px] h-4 border-l border-[#a0a0a0]" />
      <span className="w-[71px] h-4 border-l border-[#a0a0a0]" />
      <span className="w-[71px] h-4 border-l border-[#a0a0a0]" />
      <span className="w-[68px] h-4 border-l border-[#a0a0a0]" />
      <span className="w-[70px] h-4 border-l border-[#a0a0a0]" />
      <span className="w-[66px] h-4 border-l border-[#a0a0a0]" />
      <span className="flex-1 h-4 pl-[5px] pr-[41px] flex items-center justify-between border-l border-[#a0a0a0]">
        <svg viewBox="0 0 24 12" className="w-6 h-3" aria-hidden="true">
          {[0, 1, 2, 3, 4, 5, 6, 7].map((n) => (
            <g key={n}>
              <rect x={n * 3} y="0" width="2" height={9 - n} fill="#5c7a10" />
              <rect x={n * 3} y={10 - n} width="2" height={2 + n} fill="#0d3f5c" />
            </g>
          ))}
        </svg>
        8563/3 kb
      </span>
    </footer>
  );
}

function App() {
  const [timeframe, setTimeframe] = useState('H4');
  const [activeTab, setActiveTab] = useState('EURCAD,H4');

  return (
    <div className="min-h-screen bg-black px-2 pt-[30px] pb-2 font-['DejaVu_Sans_Condensed','DejaVu_Sans',sans-serif] text-[11px] leading-4 text-black">
      <main className="bg-[#efefef] overflow-hidden">
        <MenuBar />
        <MainToolbar />
        <DrawingToolbar timeframe={timeframe} onSelectTimeframe={setTimeframe} />
        <div className="border-t border-[#a0a0a0]">
          <div className="border-t border-l border-[#696969] border-r-2 border-r-[#e3e3e3] bg-white pt-0.5 pl-[3px]">
            <Chart />
          </div>
          <div className="h-0.5 bg-[#e3e3e3] border-b border-white" />
        </div>
        <ChartTabs active={activeTab} onSelect={setActiveTab} />
        <StatusBar />
      </main>
    </div>
  );
}

export default App;
